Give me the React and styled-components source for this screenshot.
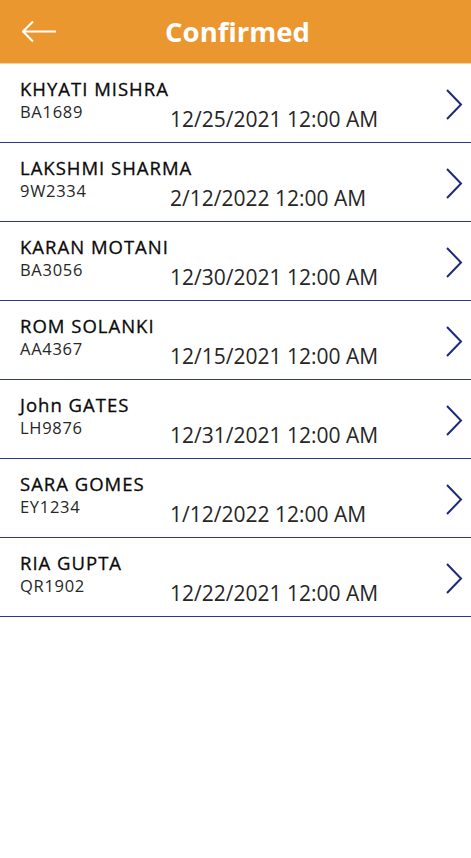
import styled, { createGlobalStyle } from 'styled-components';

const GlobalStyle = createGlobalStyle`
  body {
    margin: 0;
    background: #ffffff;
    font-family: 'Open Sans', 'Noto Sans', sans-serif;
  }
`;

const bookings = [
  { name: 'KHYATI MISHRA', code: 'BA1689', date: '12/25/2021 12:00 AM' },
  { name: 'LAKSHMI SHARMA', code: '9W2334', date: '2/12/2022 12:00 AM' },
  { name: 'KARAN MOTANI', code: 'BA3056', date: '12/30/2021 12:00 AM' },
  { name: 'ROM SOLANKI', code: 'AA4367', date: '12/15/2021 12:00 AM' },
  { name: 'John GATES', code: 'LH9876', date: '12/31/2021 12:00 AM' },
  { name: 'SARA GOMES', code: 'EY1234', date: '1/12/2022 12:00 AM' },
  { name: 'RIA GUPTA', code: 'QR1902', date: '12/22/2021 12:00 AM' },
];

const Screen = styled.div`
  width: 471px;
  min-height: 858px;
  background: #ffffff;
`;

const Header = styled.header`
  height: 63px;
  background: #ea9730;
  border-bottom: 1px solid #f5cf9f;
  display: grid;
  grid-template-columns: 80px 1fr 80px;
  align-items: center;
`;

const BackButton = styled.button`
  background: none;
  border: 0;
  padding: 0 0 0 22px;
  height: 63px;
  display: flex;
  align-items: center;
  cursor: pointer;
`;

const Title = styled.h1`
  margin: 0;
  text-align: center;
  color: #ffffff;
  font-size: 27.5px;
  font-weight: 700;
  line-height: 63px;
  padding-left: 4px;
`;

const List = styled.ul`
  list-style: none;
  margin: 0;
  padding: 0;
`;

const Row = styled.li`
  box-sizing: border-box;
  height: 79px;
  border-bottom: 1px solid #2b3a8c;
  display: grid;
  grid-template-columns: 150px 1fr 26px;
  grid-template-rows: 21px auto;
  align-content: start;
  padding: 14px 0 0 20px;
`;

const Name = styled.div`
  grid-column: 1 / 3;
  font-size: 18.5px;
  line-height: 21px;
  font-weight: 500;
  letter-spacing: 1px;
  color: #0a0a0a;
  -webkit-text-stroke: 0.3px #0a0a0a;
  white-space: nowrap;
`;

const Code = styled.div`
  font-size: 16.5px;
  line-height: 18px;
  letter-spacing: 0.7px;
  color: #262626;
  padding-top: 4px;
`;

const DateText = styled.div`
  font-size: 21px;
  line-height: 26px;
  margin-top: 7px;
  color: #262626;
  white-space: nowrap;
`;

const Chevron = styled.div`
  grid-column: 3;
  grid-row: 1 / 3;
  align-self: start;
  margin-top: 11px;
  display: flex;
`;

const BackArrow = () => (
  <svg width="36" height="24" viewBox="0 0 36 24" fill="none">
    <path d="M1 11.5 H34 M11 1.5 L1 11.5 L11 21.5" stroke="#ffffff" strokeWidth="2" />
  </svg>
);

const ChevronIcon = () => (
  <svg width="18" height="32" viewBox="0 0 18 32" fill="none">
    <path d="M2 1 L16 15.5 L2 30" stroke="#1c2a7c" strokeWidth="2" />
  </svg>
);

const App = () => {
  return (
    <Screen>
      <GlobalStyle />
      <Header>
        <BackButton aria-label="Back">
          <BackArrow />
        </BackButton>
        <Title>Confirmed</Title>
        <div />
      </Header>
      <List>
        {bookings.map((b) => (
          <Row key={b.code}>
            <Name>{b.name}</Name>
            <Code>{b.code}</Code>
            <DateText>{b.date}</DateText>
            <Chevron>
              <ChevronIcon />
            </Chevron>
          </Row>
        ))}
      </List>
    </Screen>
  );
};

export default App;
